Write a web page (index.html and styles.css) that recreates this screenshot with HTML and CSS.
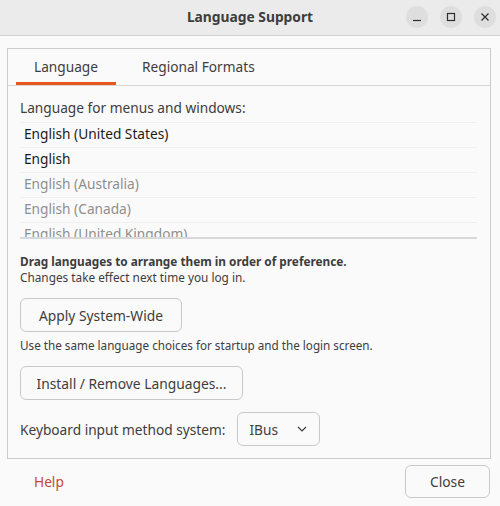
FILE: index.html
```html
<!DOCTYPE html>
<html>
<head>
    <meta charset="utf-8">
    <title>Language Support</title>
    <link rel="stylesheet" href="styles.css">
</head>
<body>
<div class="window">
    <div class="titlebar">
        <span class="title">Language Support</span>
        <div class="controls">
            <span class="ctl">
                <svg width="10" height="10" viewBox="0 0 10 10"><path d="M1 8.5h8" stroke="#2e2e2e" stroke-width="1.2"/></svg>
            </span>
            <span class="ctl">
                <svg width="10" height="10" viewBox="0 0 10 10"><rect x="1.5" y="1.5" width="7" height="7" fill="none" stroke="#2e2e2e" stroke-width="1.2"/></svg>
            </span>
            <span class="ctl">
                <svg width="10" height="10" viewBox="0 0 10 10"><path d="M1.5 1.5l7 7M8.5 1.5l-7 7" stroke="#2e2e2e" stroke-width="1.2"/></svg>
            </span>
        </div>
    </div>

    <div class="content">
        <div class="notebook">
            <div class="tabs">
                <div class="tab active">Language</div>
                <div class="tab">Regional Formats</div>
            </div>

            <div class="page">
                <div class="caption">Language for menus and windows:</div>
                <ul class="langlist">
                    <li class="current">English (United States)</li>
                    <li class="current">English</li>
                    <li>English (Australia)</li>
                    <li>English (Canada)</li>
                    <li>English (United Kingdom)</li>
                </ul>

                <div class="hint">
                    <b>Drag languages to arrange them in order of preference.</b><br>
                    Changes take effect next time you log in.
                </div>

                <button class="btn btn-apply">Apply System-Wide</button>
                <div class="note">Use the same language choices for startup and the login screen.</div>

                <button class="btn btn-install">Install / Remove Languages...</button>

                <div class="input-row">
                    <span>Keyboard input method system:</span>
                    <div class="combo">
                        IBus
                        <svg width="10" height="6" viewBox="0 0 10 6"><path d="M1 1l4 4 4-4" fill="none" stroke="#3d3d3d" stroke-width="1.2"/></svg>
                    </div>
                </div>
            </div>
        </div>

        <div class="footer">
            <a class="help">Help</a>
            <button class="btn btn-close">Close</button>
        </div>
    </div>
</div>
</body>
</html>
```

FILE: styles.css
```css
body {
    margin: 0;
    padding: 0;
    font-family: "Noto Sans", "Open Sans", sans-serif;
    font-size: 13.7px;
    color: #3d3d3d;
    background-color: #fafafa;
}

.window {
    width: 500px;
    height: 506px;
    overflow: hidden;
}

.titlebar {
    height: 35px;
    background-color: #ebebeb;
    border-bottom: 1px solid #d2d2d2;
    display: flex;
    align-items: center;
    justify-content: center;
    position: relative;
}

.title {
    font-weight: bold;
    font-size: 13.8px;
    color: #3d3d3d;
    margin-bottom: 2px;
}

.controls {
    position: absolute;
    right: 4px;
    top: 6px;
    display: flex;
    gap: 12px;
}

.ctl {
    width: 22px;
    height: 22px;
    border-radius: 50%;
    background-color: #dedede;
    display: flex;
    align-items: center;
    justify-content: center;
}

.content {
    padding: 12px 9px 0 7px;
}

.notebook {
    height: 409px;
    border: 1px solid #cdcdcd;
    background-color: #fafafa;
}

.tabs {
    display: flex;
    height: 36px;
    padding-left: 8px;
    border-bottom: 1px solid #d6d6d6;
}

.tab {
    padding: 0 18px;
    line-height: 35px;
    margin-right: 8px;
    color: #3d3d3d;
}

.tab.active {
    box-shadow: inset 0 -3px 0 #e95420;
}

.page {
    padding: 9px 13px 0 12px;
}

.caption {
    line-height: 25px;
}

.langlist {
    list-style: none;
    margin: 2px 0 0;
    padding: 0;
    height: 114px;
    overflow: hidden;
    border-top: 1px solid #f0f0f0;
    border-bottom: 2px solid #d8d8d8;
}

.langlist li {
    height: 22px;
    line-height: 22px;
    padding: 0 0 2px 4px;
    border-bottom: 1px solid #f0f0f0;
    color: #8e8e8e;
    white-space: nowrap;
}

.langlist li.current {
    color: #1b1b1b;
}

.hint {
    margin-top: 14px;
    font-size: 11.8px;
    line-height: 16px;
}

.btn {
    font-family: inherit;
    font-size: 13.8px;
    color: #3d3d3d;
    background-color: #fafafa;
    border: 1px solid #c9c9c9;
    border-radius: 6px;
    height: 34px;
    padding: 0;
    display: block;
    white-space: nowrap;
}

.btn-apply {
    margin-top: 13px;
    width: 162px;
}

.note {
    font-size: 11.7px;
    margin-top: 5px;
    line-height: 16px;
}

.btn-install {
    margin-top: 13px;
    width: 223px;
}

.input-row {
    display: flex;
    align-items: center;
    margin-top: 12px;
}

.combo {
    margin-left: 12px;
    width: 83px;
    height: 34px;
    box-sizing: border-box;
    border: 1px solid #c9c9c9;
    border-radius: 6px;
    display: flex;
    align-items: center;
    justify-content: space-between;
    padding: 0 12px 0 11px;
}

.footer {
    display: flex;
    justify-content: space-between;
    align-items: center;
    height: 45px;
}

.help {
    color: #c4492b;
    margin-left: 27px;
}

.btn-close {
    width: 85px;
    height: 33px;
    margin-right: 1px;
}
```
